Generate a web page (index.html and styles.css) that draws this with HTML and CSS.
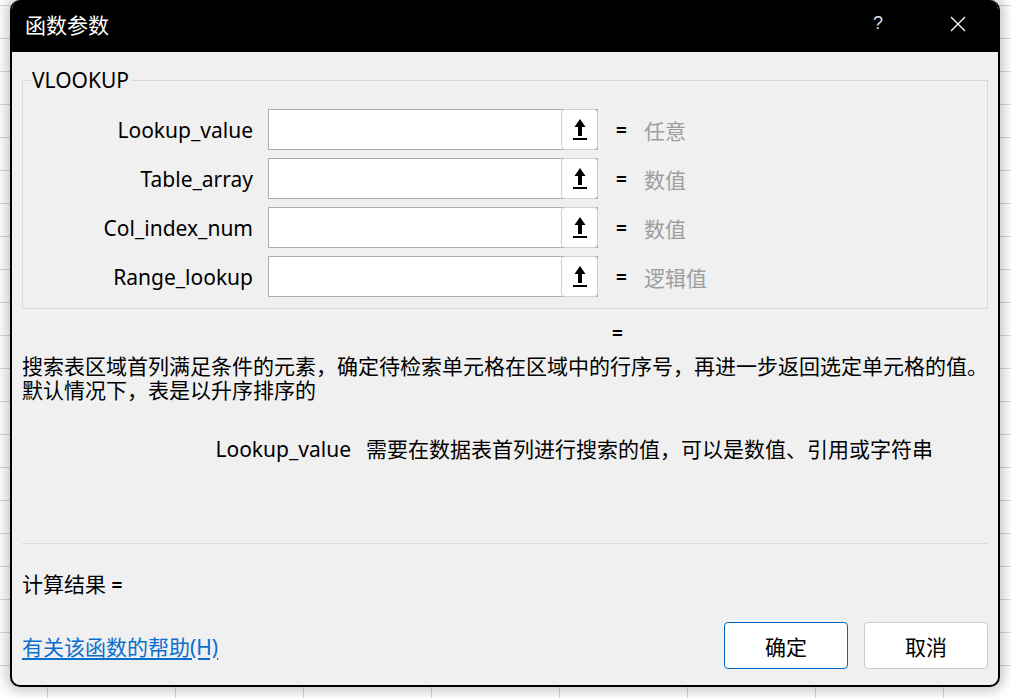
FILE: index.html
```html
<!DOCTYPE html>
<html lang="zh-CN">
<head>
<meta charset="utf-8">
<title>函数参数</title>
<link rel="stylesheet" href="styles.css">
</head>
<body>
<div class="sheet">
  <div class="dialog">
    <div class="titlebar">
      <span class="title">函数参数</span>
      <span class="help">?</span>
      <span class="close">
        <svg width="16" height="16" viewBox="0 0 16 16"><path d="M1 1 L15 15 M15 1 L1 15" stroke="#fff" stroke-width="1.3" fill="none"/></svg>
      </span>
    </div>
    <div class="content">
      <fieldset class="group">
        <legend class="legend">VLOOKUP</legend>
        <div class="args">
          <div class="arg">
            <span class="label">Lookup_value</span>
            <div class="field"><span class="input"></span><span class="pick"><svg width="14" height="24" viewBox="0 0 14 24"><path d="M7 1 L12.5 9 L9 9 L9 18 L5 18 L5 9 L1.5 9 Z" fill="#000"/><rect x="0" y="20" width="14" height="2" fill="#000"/></svg></span></div>
            <span class="eq">=</span><span class="val">任意</span>
          </div>
          <div class="arg">
            <span class="label">Table_array</span>
            <div class="field"><span class="input"></span><span class="pick"><svg width="14" height="24" viewBox="0 0 14 24"><path d="M7 1 L12.5 9 L9 9 L9 18 L5 18 L5 9 L1.5 9 Z" fill="#000"/><rect x="0" y="20" width="14" height="2" fill="#000"/></svg></span></div>
            <span class="eq">=</span><span class="val">数值</span>
          </div>
          <div class="arg">
            <span class="label">Col_index_num</span>
            <div class="field"><span class="input"></span><span class="pick"><svg width="14" height="24" viewBox="0 0 14 24"><path d="M7 1 L12.5 9 L9 9 L9 18 L5 18 L5 9 L1.5 9 Z" fill="#000"/><rect x="0" y="20" width="14" height="2" fill="#000"/></svg></span></div>
            <span class="eq">=</span><span class="val">数值</span>
          </div>
          <div class="arg">
            <span class="label">Range_lookup</span>
            <div class="field"><span class="input"></span><span class="pick"><svg width="14" height="24" viewBox="0 0 14 24"><path d="M7 1 L12.5 9 L9 9 L9 18 L5 18 L5 9 L1.5 9 Z" fill="#000"/><rect x="0" y="20" width="14" height="2" fill="#000"/></svg></span></div>
            <span class="eq">=</span><span class="val">逻辑值</span>
          </div>
        </div>
      </fieldset>
      <div class="result-eq"><span class="eq">=</span></div>
      <p class="desc">搜索表区域首列满足条件的元素，确定待检索单元格在区域中的行序号，再进一步返回选定单元格的值。<br>默认情况下，表是以升序排序的</p>
      <div class="argdesc"><span class="argname">Lookup_value</span><span class="argtext">需要在数据表首列进行搜索的值，可以是数值、引用或字符串</span></div>
      <div class="sep"></div>
      <div class="calc">计算结果 <span class="eq-inline">=</span></div>
      <div class="footer">
        <a class="helplink" href="#">有关该函数的帮助(H)</a>
        <div class="buttons">
          <button class="btn primary">确定</button>
          <button class="btn">取消</button>
        </div>
      </div>
    </div>
  </div>
</div>
</body>
</html>
```
FILE: styles.css
```css
* { box-sizing: border-box; }
html, body { margin: 0; padding: 0; }
body {
  width: 1011px;
  height: 698px;
  overflow: hidden;
  font-family: "Noto Sans", "Noto Sans CJK SC", sans-serif;
  font-size: 21px;
  color: #000;
}
.sheet {
  width: 1011px;
  height: 698px;
  padding-left: 10px;
  background-color: #ffffff;
  background-image:
    linear-gradient(to bottom, transparent 32px, #d8d8d8 32px, #d8d8d8 33px, transparent 33px),
    linear-gradient(to right, transparent 47px, #d8d8d8 47px, #d8d8d8 48px, transparent 48px);
  background-size: 100% 33px, 128px 100%;
  background-position: 0 6px, 0 0;
}
.dialog {
  width: 990px;
  height: 687px;
  background: #f0f0f0;
  border: 2px solid #000;
  border-top: 0;
  border-radius: 10px;
  overflow: hidden;
  display: flex;
  flex-direction: column;
  box-shadow: 0 0 12px 4px rgba(0,0,0,0.22);
}
.titlebar {
  height: 52px;
  background: #000;
  color: #fff;
  display: flex;
  align-items: center;
  padding-left: 13px;
  flex-shrink: 0;
}
.title { font-size: 21px; flex: 1; line-height: 1; padding-bottom: 2px; }
.help {
  font-family: "Liberation Sans", sans-serif;
  font-size: 18px;
  font-weight: 300;
  color: #e0e0e0;
  width: 80px;
  text-align: center;
  padding-bottom: 6px;
}
.close {
  width: 80px;
  display: flex;
  justify-content: center;
  align-items: center;
  padding-bottom: 4px;
}
.content {
  flex: 1;
  padding: 0 10px;
  display: flex;
  flex-direction: column;
}
.group {
  margin: 15px 0 0 0;
  border: 1px solid #d9d9d9;
  padding: 16px 0 11px 8px;
  min-width: 0;
}
.legend {
  padding: 0 2px 0 1px;
  font-size: 21px;
  line-height: 26px;
}
.args {
  display: flex;
  flex-direction: column;
  gap: 8px;
}
.arg {
  display: flex;
  align-items: center;
  height: 41px;
}
.label {
  width: 222px;
  text-align: right;
  margin-right: 15px;
}
.field {
  width: 330px;
  height: 41px;
  display: flex;
  background: #fff;
  border: 1px solid #acacac;
}
.input { flex: 1; }
.pick {
  width: 37px;
  height: 41px;
  margin: -1px -1px -1px 0;
  border: 1px solid #cfcfcf;
  border-radius: 4px;
  background: #fff;
  display: flex;
  align-items: center;
  justify-content: center;
}
.eq {
  font-weight: bold;
  font-size: 19px;
  margin-left: 18px;
  width: 28px;
}
.val { color: #9d9d9d; }
.result-eq {
  padding-left: 572px;
  padding-top: 3px;
  height: 44px;
  display: flex;
  align-items: center;
}
.desc {
  margin: 0;
  line-height: 24px;
  padding-top: 1px;
}
.argdesc {
  margin-top: 35px;
  display: flex;
  line-height: 24px;
}
.argname {
  width: 329px;
  text-align: right;
  margin-right: 15px;
}
.sep {
  margin-top: 82px;
  height: 1px;
  background: #dcdcdc;
}
.calc {
  margin-top: 28px;
  line-height: 24px;
}
.eq-inline { font-weight: bold; font-size: 19px; }
.footer {
  margin-top: 25px;
  display: flex;
  align-items: center;
  justify-content: space-between;
}
.helplink {
  color: #0a6ecf;
  text-decoration: underline;
  text-underline-offset: 3px;
}
.buttons { display: flex; gap: 16px; }
.btn {
  width: 124px;
  height: 47px;
  background: #fff;
  border: 1px solid #cccccc;
  border-radius: 4px;
  font-family: "Noto Sans", "Noto Sans CJK SC", sans-serif;
  font-size: 21px;
  color: #000;
  padding: 0;
}
.btn.primary { border-color: #0067c0; }
```
